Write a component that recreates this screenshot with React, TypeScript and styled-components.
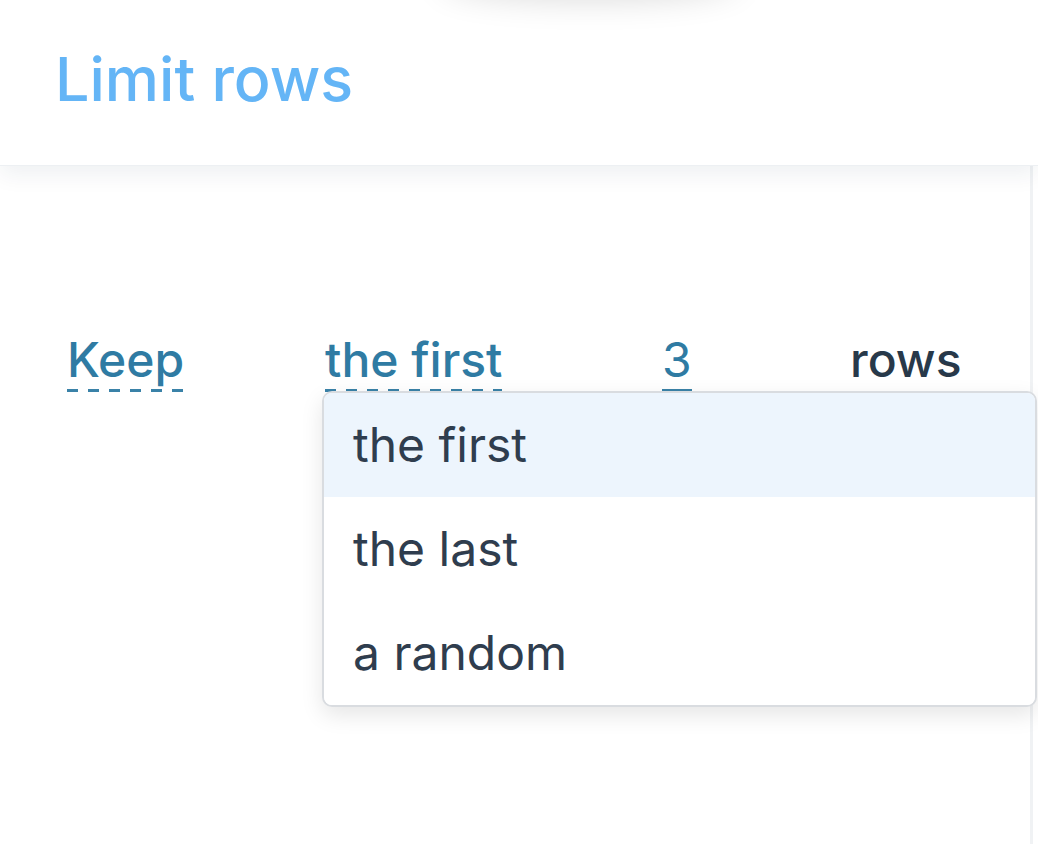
import * as React from 'react';
import styled, { createGlobalStyle } from 'styled-components';

const GlobalStyle = createGlobalStyle`
	html, body {
		margin: 0;
		padding: 0;
		background: #fff;
		font-family: Inter, "Noto Sans", sans-serif;
	}
	* {
		box-sizing: border-box;
	}
`;

const Page = styled.div`
	width: 1038px;
	height: 844px;
	overflow: hidden;
	display: flex;
	flex-direction: column;
	background: #fff;
`;

const Header = styled.header`
	position: relative;
	z-index: 1;
	height: 166px;
	flex-shrink: 0;
	padding: 43px 0 0 55px;
	background: #fff;
	border-bottom: 1px solid #edf0f3;
	box-shadow: 0 8px 22px rgba(20, 40, 70, 0.07);
	&::before {
		content: '';
		position: absolute;
		top: -42px;
		left: 440px;
		width: 300px;
		height: 40px;
		border-radius: 50%;
		box-shadow: 0 0 34px rgba(0, 0, 0, 0.16);
	}
`;

const Title = styled.h1`
	margin: 0;
	font-size: 61px;
	line-height: 1.2;
	font-weight: 500;
	color: #64b5f6;
`;

const Content = styled.main`
	position: relative;
	flex: 1;
	margin-right: 5px;
	padding-top: 165px;
	border-right: 3px solid #f0f2f4;
`;

const Sentence = styled.div`
	display: grid;
	grid-template-columns: 258px 337px 188px auto;
	align-items: baseline;
	padding-left: 67px;
	font-size: 48px;
	line-height: 1.2;
	font-weight: 500;
`;

const Slot = styled.div`
	position: relative;
`;

const Token = styled.span<{ $dashed?: boolean }>`
	display: inline-block;
	color: #2f7ba3;
	font-weight: ${p => p.$dashed ? 500 : 400};
	padding-bottom: 3px;
	background-image: ${p => p.$dashed
		? 'linear-gradient(to right, #3a82a8 0 11px, transparent 11px 100%)'
		: 'linear-gradient(#3a82a8, #3a82a8)'};
	background-size: ${p => p.$dashed ? '21px 3px' : '100% 3px'};
	background-repeat: repeat-x;
	background-position: left bottom;
`;

const Word = styled.span`
	color: #28394a;
`;

const Menu = styled.ul`
	position: absolute;
	z-index: 2;
	top: 100%;
	left: -3px;
	width: 715px;
	margin: -1px 0 0;
	padding: 0;
	list-style: none;
	background: #fff;
	border: 2px solid #d9dce0;
	border-radius: 10px;
	box-shadow: 0 8px 22px rgba(0, 0, 0, 0.1);
	overflow: hidden;
`;

const Option = styled.li<{ $active?: boolean }>`
	height: 104px;
	display: flex;
	align-items: center;
	padding-left: 29px;
	font-size: 48px;
	font-weight: 400;
	color: #2f3d4e;
	background: ${p => p.$active ? '#edf5fd' : '#fff'};
`;

const options = ['the first', 'the last', 'a random'];

export default function App() {
	return (
		<Page>
			<GlobalStyle />
			<Header>
				<Title>Limit rows</Title>
			</Header>
			<Content>
				<Sentence>
					<Slot>
						<Token $dashed>Keep</Token>
					</Slot>
					<Slot>
						<Token $dashed>the first</Token>
						<Menu>
							{options.map(o => (
								<Option key={o} $active={o === 'the first'}>{o}</Option>
							))}
						</Menu>
					</Slot>
					<Slot>
						<Token>3</Token>
					</Slot>
					<Slot>
						<Word>rows</Word>
					</Slot>
				</Sentence>
			</Content>
		</Page>
	);
}
